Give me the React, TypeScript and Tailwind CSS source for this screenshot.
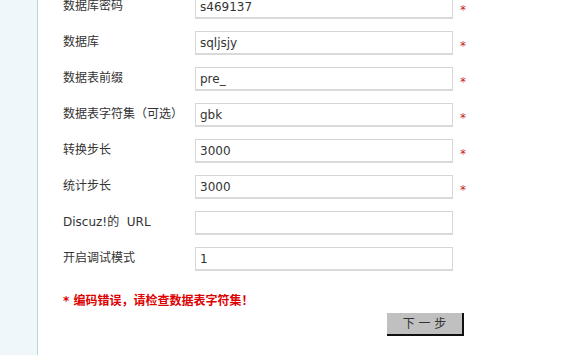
import React from "react";

const rows = [
  { label: "数据库密码", value: "s469137", required: true },
  { label: "数据库", value: "sqljsjy", required: true },
  { label: "数据表前缀", value: "pre_", required: true },
  { label: "数据表字符集（可选）", value: "gbk", required: true },
  { label: "转换步长", value: "3000", required: true },
  { label: "统计步长", value: "3000", required: true },
  { label: "Discuz!的  URL", value: "", required: false },
  { label: "开启调试模式", value: "1", required: false },
];

const font = { fontFamily: '"DejaVu Sans", "Noto Sans CJK SC", sans-serif' };

export default function App() {
  return (
    <div className="flex w-[566px] h-[355px] overflow-hidden bg-white" style={font}>
      <div className="w-[38px] shrink-0 bg-[#f0f7fb] border-r border-[#c3d1dc]" />
      <div className="flex flex-col pl-[25px] -mt-[11px]">
        {rows.map((row) => (
          <div key={row.label} className="flex items-center h-[36px]">
            <span className="w-[132px] shrink-0 text-[12px] text-[#333] whitespace-pre leading-none -mt-[2px]">
              {row.label}
            </span>
            <div className="w-[258px] h-[24px] border border-[#d6d6d6] border-b-2 border-b-[#d9d9d9] bg-white flex items-center pl-[4px] text-[12px] text-[#333] leading-none">
              {row.value}
            </div>
            {row.required && (
              <span className="ml-[7px] mt-[6px] text-[12px] text-[#c02828] leading-none">*</span>
            )}
          </div>
        ))}
        <div className="mt-[18px] text-[12px] font-bold text-[#dd0000] leading-none">
          * 编码错误，请检查数据表字符集！
        </div>
        <div className="flex pl-[324px] mt-[6px]">
          <button className="w-[77px] h-[23px] bg-[#c0c0c0] border-r-2 border-b-2 border-[#111] text-[12px] text-[#333] leading-none whitespace-pre">
            下 一 步
          </button>
        </div>
      </div>
    </div>
  );
}
